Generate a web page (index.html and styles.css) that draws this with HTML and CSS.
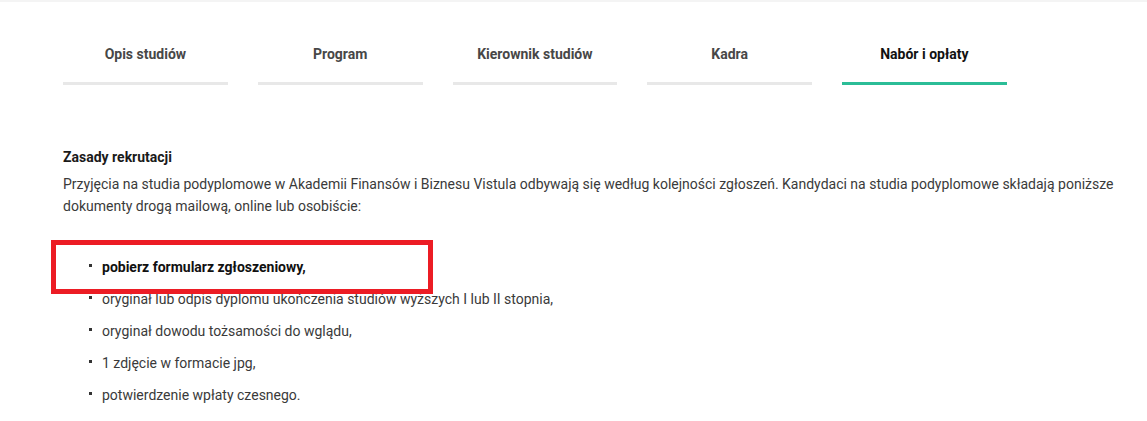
FILE: index.html
```html
<!DOCTYPE html>
<html lang="pl">
<head>
<meta charset="utf-8">
<title>Nabór i opłaty</title>
<link rel="stylesheet" href="styles.css">
</head>
<body>
<div class="topbar"></div>
<div class="page">
  <nav class="tabs">
    <div class="tab">Opis studiów</div>
    <div class="tab">Program</div>
    <div class="tab">Kierownik studiów</div>
    <div class="tab">Kadra</div>
    <div class="tab active">Nabór i opłaty</div>
  </nav>
  <section class="content">
    <h3 class="heading">Zasady rekrutacji</h3>
    <p class="lead">Przyjęcia na studia podyplomowe w Akademii Finansów i Biznesu Vistula odbywają się według kolejności zgłoszeń. Kandydaci na studia podyplomowe składają poniższe dokumenty drogą mailową, online lub osobiście:</p>
    <ul class="docs">
      <li class="strong">pobierz formularz zgłoszeniowy,</li>
      <li>oryginał lub odpis dyplomu ukończenia studiów wyższych I lub II stopnia,</li>
      <li>oryginał dowodu tożsamości do wglądu,</li>
      <li>1 zdjęcie w formacie jpg,</li>
      <li>potwierdzenie wpłaty czesnego.</li>
    </ul>
    <div class="highlight"></div>
  </section>
</div>
</body>
</html>
```
FILE: styles.css
```css
html, body {
  margin: 0;
  padding: 0;
  background: #ffffff;
  font-family: Roboto, "Liberation Sans", Arial, sans-serif;
  font-size: 14px;
  color: #333333;
}

.topbar {
  height: 2px;
  background: #f4f4f4;
}

.page {
  width: 1060px;
  padding-left: 63px;
}

.tabs {
  display: flex;
  gap: 30px;
  margin-top: 28px;
}

.tab {
  width: 164.75px;
  flex: none;
  padding: 14px 0 18px;
  line-height: 20px;
  text-align: center;
  font-weight: 700;
  color: #474747;
  border-bottom: 3px solid #e8e8e8;
}

.tab.active {
  color: #111111;
  border-bottom-color: #2bbd97;
}

.content {
  position: relative;
  margin-top: 61px;
}

.heading {
  margin: 0 0 5px;
  font-size: 14px;
  line-height: 22px;
  font-weight: 700;
  color: #1a1a1a;
}

.lead {
  margin: 0;
  line-height: 22px;
  color: #3a3a3a;
}

.docs {
  list-style: none;
  margin: 39px 0 0;
  padding: 0 0 0 26px;
}

.docs li {
  display: flex;
  align-items: center;
  line-height: 22px;
  margin-bottom: 10px;
  color: #3a3a3a;
}

.docs li::before {
  content: "";
  width: 3px;
  height: 3px;
  margin-right: 10px;
  margin-top: -3px;
  background: #333333;
  flex: none;
}

.docs li.strong {
  font-weight: 700;
  color: #111111;
}

.highlight {
  position: absolute;
  left: -12px;
  top: 94px;
  width: 372px;
  height: 44px;
  border: 5px solid #ec1c24;
}
```
